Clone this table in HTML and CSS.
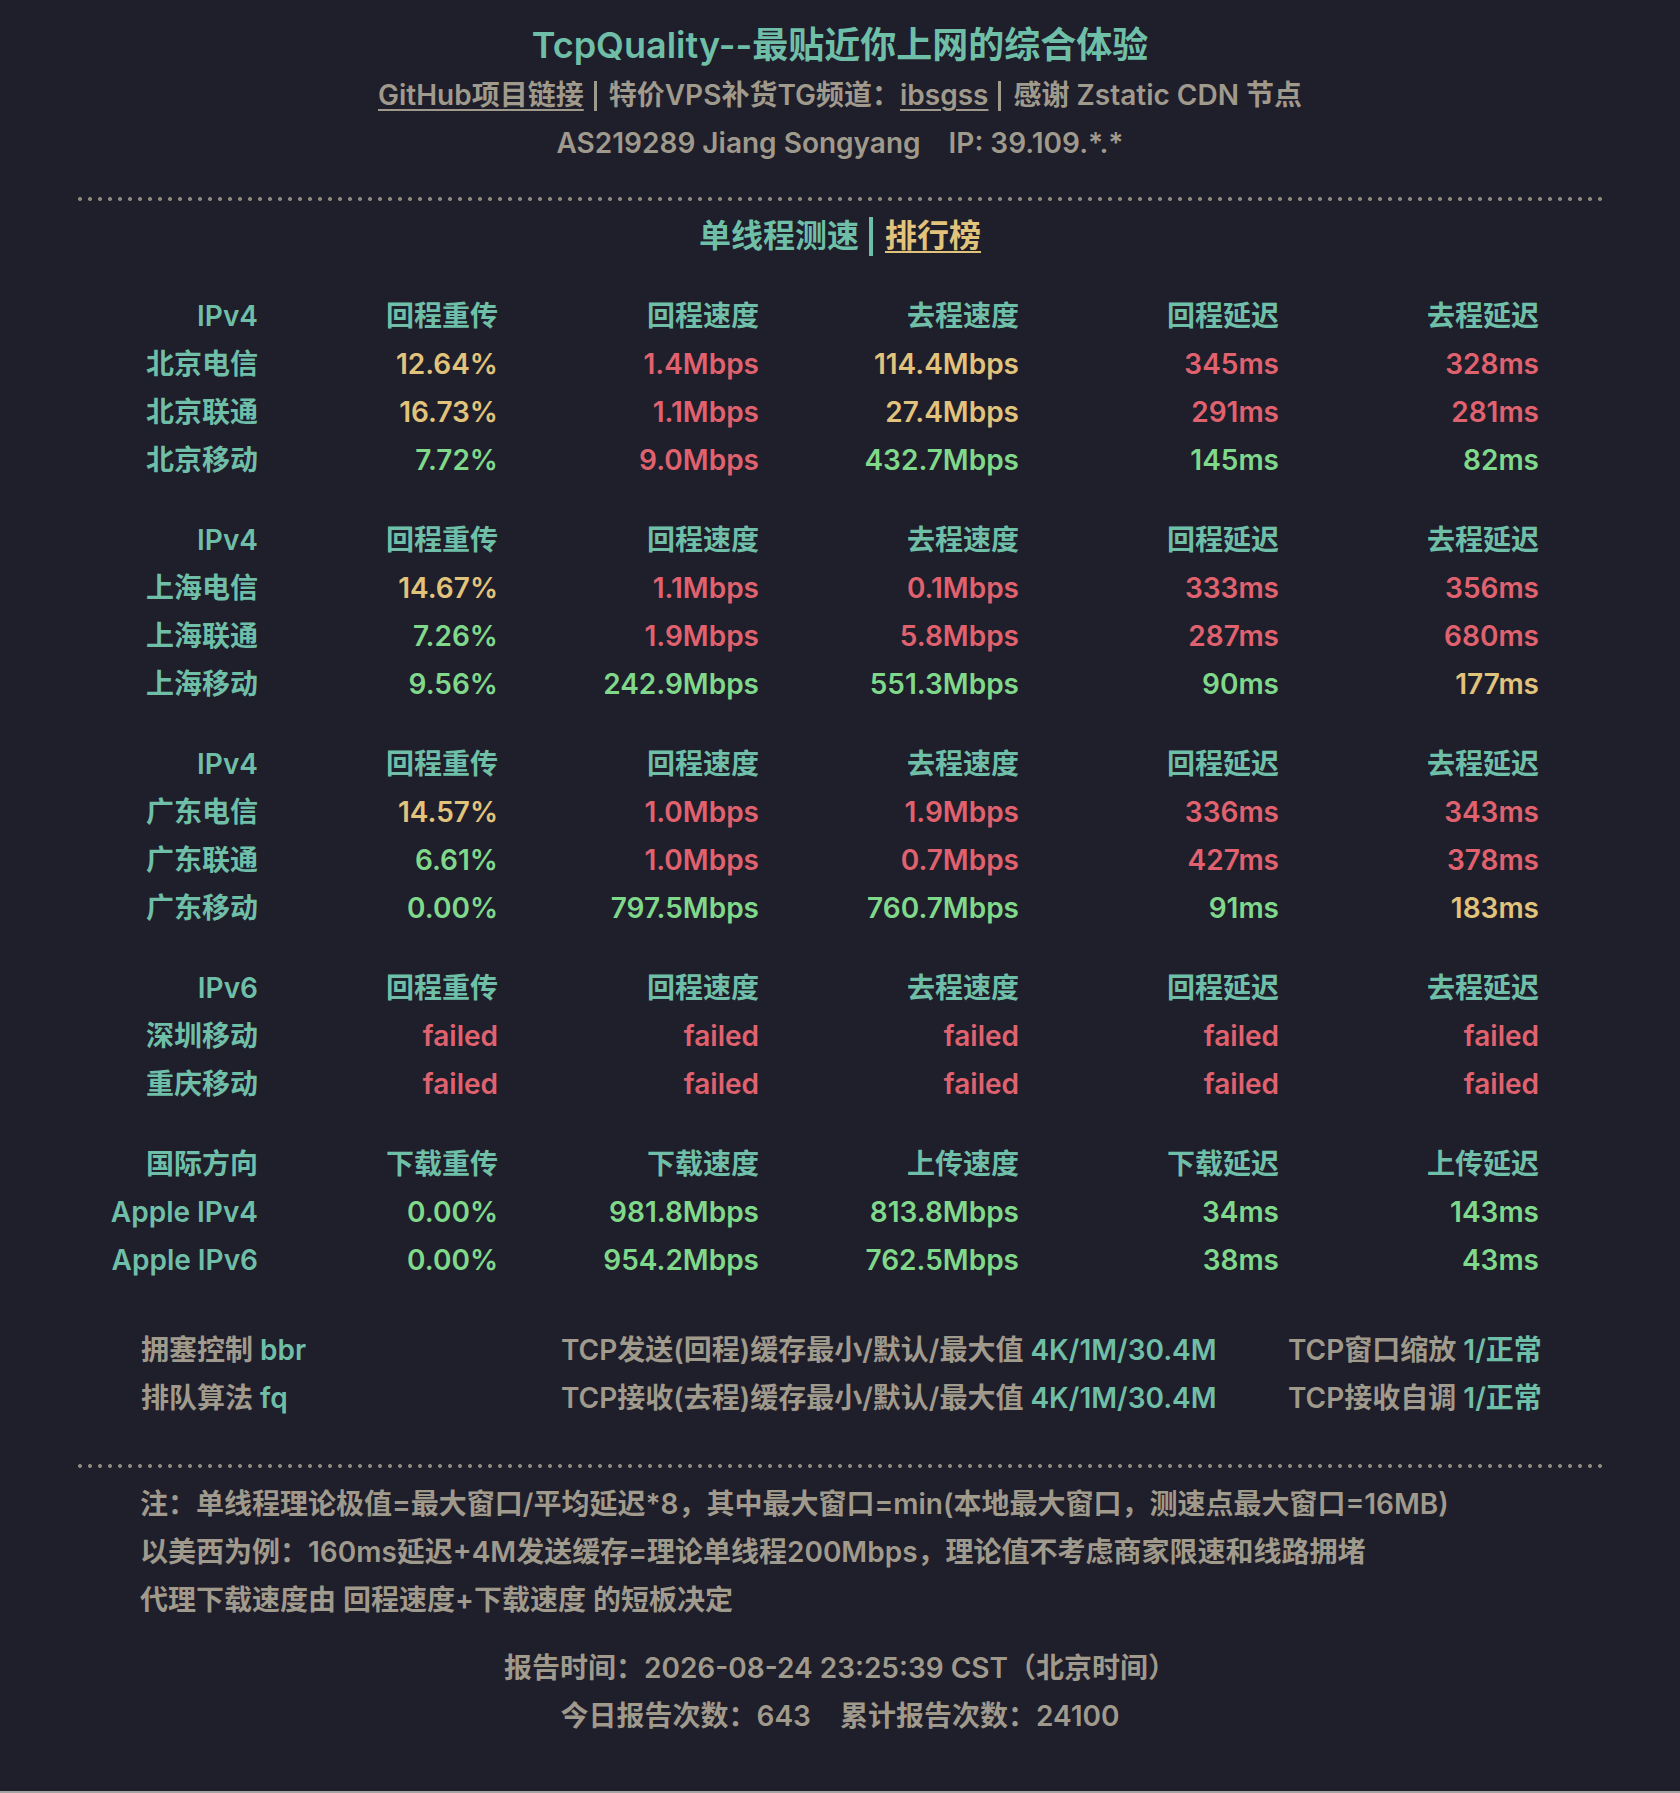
FILE: index.html
```html
<!DOCTYPE html>
<html lang="zh-CN">
<head>
<meta charset="utf-8">
<title>TcpQuality</title>
<link rel="stylesheet" href="styles.css">
</head>
<body>
<div class="page">
  <header class="head">
    <h1 class="title">TcpQuality--最贴近你上网的综合体验</h1>
    <div class="links"><a class="link" href="#">GitHub项目链接</a><span class="vbar"></span>特价VPS补货TG频道：<a class="link" href="#">ibsgss</a><span class="vbar"></span>感谢 Zstatic CDN 节点</div>
    <div class="asn">AS219289 Jiang Songyang<span class="ip">IP: 39.109.*.*</span></div>
  </header>

  <div class="dots"></div>

  <div class="section-title"><span class="sec-name">单线程测速</span><span class="sec-bar"></span><a class="sec-link" href="#">排行榜</a></div>

  <div class="grid">
    <div class="h">IPv4</div><div class="h">回程重传</div><div class="h">回程速度</div><div class="h">去程速度</div><div class="h">回程延迟</div><div class="h">去程延迟</div>
    <div class="h">北京电信</div><div class="y">12.64%</div><div class="r">1.4Mbps</div><div class="y">114.4Mbps</div><div class="r">345ms</div><div class="r">328ms</div>
    <div class="h">北京联通</div><div class="y">16.73%</div><div class="r">1.1Mbps</div><div class="y">27.4Mbps</div><div class="r">291ms</div><div class="r">281ms</div>
    <div class="h">北京移动</div><div class="g">7.72%</div><div class="r">9.0Mbps</div><div class="g">432.7Mbps</div><div class="g">145ms</div><div class="g">82ms</div>
  </div>

  <div class="grid">
    <div class="h">IPv4</div><div class="h">回程重传</div><div class="h">回程速度</div><div class="h">去程速度</div><div class="h">回程延迟</div><div class="h">去程延迟</div>
    <div class="h">上海电信</div><div class="y">14.67%</div><div class="r">1.1Mbps</div><div class="r">0.1Mbps</div><div class="r">333ms</div><div class="r">356ms</div>
    <div class="h">上海联通</div><div class="g">7.26%</div><div class="r">1.9Mbps</div><div class="r">5.8Mbps</div><div class="r">287ms</div><div class="r">680ms</div>
    <div class="h">上海移动</div><div class="g">9.56%</div><div class="g">242.9Mbps</div><div class="g">551.3Mbps</div><div class="g">90ms</div><div class="y">177ms</div>
  </div>

  <div class="grid">
    <div class="h">IPv4</div><div class="h">回程重传</div><div class="h">回程速度</div><div class="h">去程速度</div><div class="h">回程延迟</div><div class="h">去程延迟</div>
    <div class="h">广东电信</div><div class="y">14.57%</div><div class="r">1.0Mbps</div><div class="r">1.9Mbps</div><div class="r">336ms</div><div class="r">343ms</div>
    <div class="h">广东联通</div><div class="g">6.61%</div><div class="r">1.0Mbps</div><div class="r">0.7Mbps</div><div class="r">427ms</div><div class="r">378ms</div>
    <div class="h">广东移动</div><div class="g">0.00%</div><div class="g">797.5Mbps</div><div class="g">760.7Mbps</div><div class="g">91ms</div><div class="y">183ms</div>
  </div>

  <div class="grid">
    <div class="h">IPv6</div><div class="h">回程重传</div><div class="h">回程速度</div><div class="h">去程速度</div><div class="h">回程延迟</div><div class="h">去程延迟</div>
    <div class="h">深圳移动</div><div class="r">failed</div><div class="r">failed</div><div class="r">failed</div><div class="r">failed</div><div class="r">failed</div>
    <div class="h">重庆移动</div><div class="r">failed</div><div class="r">failed</div><div class="r">failed</div><div class="r">failed</div><div class="r">failed</div>
  </div>

  <div class="grid">
    <div class="h">国际方向</div><div class="h">下载重传</div><div class="h">下载速度</div><div class="h">上传速度</div><div class="h">下载延迟</div><div class="h">上传延迟</div>
    <div class="h">Apple IPv4</div><div class="g">0.00%</div><div class="g">981.8Mbps</div><div class="g">813.8Mbps</div><div class="g">34ms</div><div class="g">143ms</div>
    <div class="h">Apple IPv6</div><div class="g">0.00%</div><div class="g">954.2Mbps</div><div class="g">762.5Mbps</div><div class="g">38ms</div><div class="g">43ms</div>
  </div>

  <div class="config">
    <div>拥塞控制 <span class="v">bbr</span></div>
    <div>TCP发送(回程)缓存最小/默认/最大值 <span class="v">4K/1M/30.4M</span></div>
    <div>TCP窗口缩放 <span class="v">1/正常</span></div>
    <div>排队算法 <span class="v">fq</span></div>
    <div>TCP接收(去程)缓存最小/默认/最大值 <span class="v">4K/1M/30.4M</span></div>
    <div>TCP接收自调 <span class="v">1/正常</span></div>
  </div>

  <div class="dots dots-bottom"></div>

  <div class="notes">
    <p>注：单线程理论极值=最大窗口/平均延迟*8，其中最大窗口=min(本地最大窗口，测速点最大窗口=16MB)</p>
    <p>以美西为例：160ms延迟+4M发送缓存=理论单线程200Mbps，理论值不考虑商家限速和线路拥堵</p>
    <p>代理下载速度由 回程速度+下载速度 的短板决定</p>
  </div>

  <div class="report">
    <p>报告时间：2026-08-24 23:25:39 CST（北京时间）</p>
    <p>今日报告次数：643<span class="gap"></span>累计报告次数：24100</p>
  </div>
</div>
</body>
</html>
```

FILE: styles.css
```css
html {
  background: #a3a3a3;
}

body {
  margin: 0;
  height: 1791px;
  background: #1f1e2b;
  color: #a09a8c;
  font-family: "Inter", "Noto Sans CJK SC", sans-serif;
  font-weight: 600;
  font-size: 28px;
  line-height: 48px;
}

.page {
  width: 1524px;
  margin: 0 auto;
  padding-top: 19px;
}

.head {
  text-align: center;
}

.title {
  margin: 0;
  font-size: 36px;
  line-height: 52px;
  font-weight: 600;
  color: #6fbfa8;
}

.links,
.asn {
  line-height: 48px;
}

.link {
  color: #a09a8c;
  text-decoration: underline;
  text-decoration-thickness: 2px;
  text-underline-offset: 4px;
}

.vbar {
  display: inline-block;
  width: 3px;
  height: 30px;
  margin: 0 12px 0 10px;
  background: #a09a8c;
  vertical-align: -6px;
}

.ip {
  margin-left: 28px;
}

.dots {
  height: 4px;
  margin-top: 30px;
  background-image: radial-gradient(circle at center, #8c877c 1.6px, rgba(140, 135, 124, 0) 2.3px);
  background-size: 10px 4px;
  background-repeat: repeat-x;
  background-position: -3px 0;
}

.section-title {
  margin-top: 11px;
  display: flex;
  justify-content: center;
  align-items: center;
  font-size: 32px;
  line-height: 48px;
}

.sec-name {
  color: #6fbfa8;
}

.sec-bar {
  width: 4px;
  height: 39px;
  margin: 0 12px 0 10px;
  background: #6fbfa8;
}

.sec-link {
  color: #e2c37b;
  text-decoration: underline;
  text-decoration-thickness: 2px;
  text-underline-offset: 4px;
}

.grid {
  display: grid;
  grid-template-columns: 160px 240px 261px 260px 260px 260px;
  margin-left: 20px;
  margin-top: 32px;
  text-align: right;
  white-space: nowrap;
}

.h {
  color: #6fbfa8;
}

.y {
  color: #e2c37b;
}

.r {
  color: #e0626f;
}

.g {
  color: #80d98b;
}

.config {
  display: grid;
  grid-template-columns: 420px 727px auto;
  margin-top: 42px;
  padding-left: 63px;
  white-space: nowrap;
}

.v {
  color: #6fbfa8;
}

.dots-bottom {
  margin-top: 42px;
}

.notes {
  margin-top: 12px;
  padding-left: 62px;
}

.notes p,
.report p {
  margin: 0;
}

.report {
  margin-top: 20px;
  text-align: center;
}

.gap {
  display: inline-block;
  width: 29px;
}
```
